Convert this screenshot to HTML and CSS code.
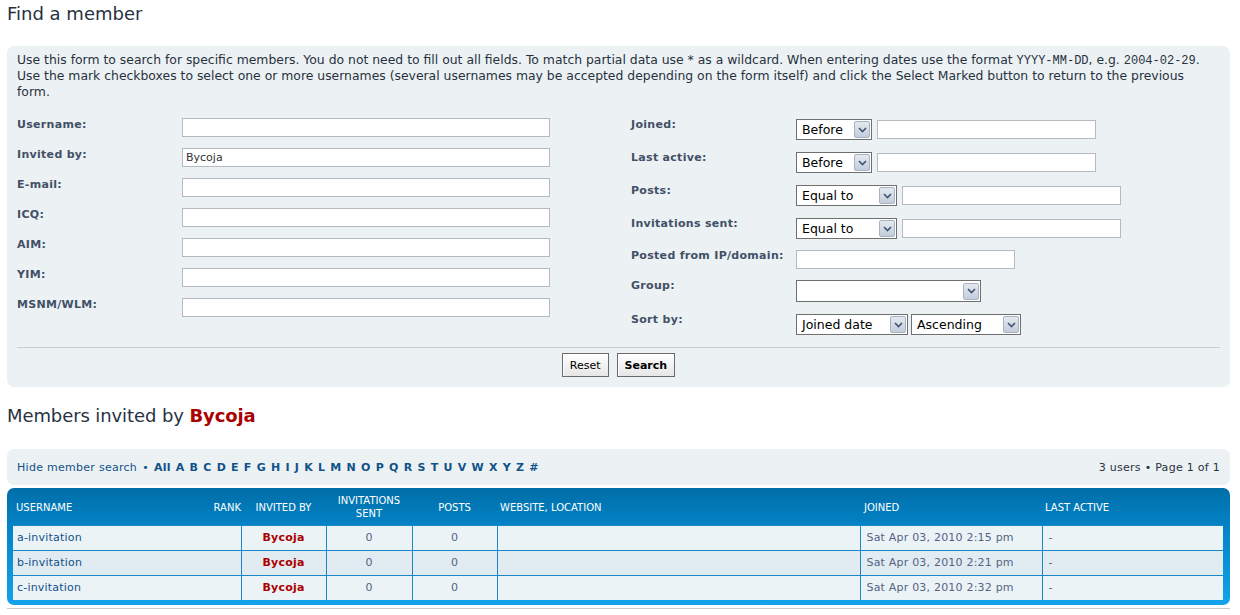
FILE: index.html
```html
<!DOCTYPE html>
<html lang="en">
<head>
<meta charset="utf-8">
<title>Find a member</title>
<link rel="stylesheet" href="styles.css">
</head>
<body>
<h2 class="title">Find a member</h2>
<form class="panel search-panel">
  <p class="intro">Use this form to search for specific members. You do not need to fill out all fields. To match partial data use * as a wildcard. When entering dates use the format <code>YYYY-MM-DD</code>, e.g. <code>2004-02-29</code>. Use the mark checkboxes to select one or more usernames (several usernames may be accepted depending on the form itself) and click the Select Marked button to return to the previous form.</p>
  <div class="fields">
    <div class="col col-left">
      <div class="row"><label class="lbl">Username:</label><input class="inp w-long" type="text"></div>
      <div class="row"><label class="lbl">Invited by:</label><input class="inp w-long" type="text" value="Bycoja"></div>
      <div class="row"><label class="lbl">E-mail:</label><input class="inp w-long" type="text"></div>
      <div class="row"><label class="lbl">ICQ:</label><input class="inp w-long" type="text"></div>
      <div class="row"><label class="lbl">AIM:</label><input class="inp w-long" type="text"></div>
      <div class="row"><label class="lbl">YIM:</label><input class="inp w-long" type="text"></div>
      <div class="row"><label class="lbl">MSNM/WLM:</label><input class="inp w-long" type="text"></div>
    </div>
    <div class="col col-right">
      <div class="rrow h33"><label class="lbl">Joined:</label><span class="sel w-before"><span class="sel-text">Before</span><span class="arrow"><svg width="9" height="6" viewBox="0 0 9 6"><path d="M1 1 L4.5 4.5 L8 1" fill="none" stroke="#3f5374" stroke-width="1.6"/></svg></span></span><input class="inp w-mid" type="text"></div>
      <div class="rrow h33"><label class="lbl">Last active:</label><span class="sel w-before"><span class="sel-text">Before</span><span class="arrow"><svg width="9" height="6" viewBox="0 0 9 6"><path d="M1 1 L4.5 4.5 L8 1" fill="none" stroke="#3f5374" stroke-width="1.6"/></svg></span></span><input class="inp w-mid" type="text"></div>
      <div class="rrow h33"><label class="lbl">Posts:</label><span class="sel w-equal"><span class="sel-text">Equal to</span><span class="arrow"><svg width="9" height="6" viewBox="0 0 9 6"><path d="M1 1 L4.5 4.5 L8 1" fill="none" stroke="#3f5374" stroke-width="1.6"/></svg></span></span><input class="inp w-mid" type="text"></div>
      <div class="rrow h32"><label class="lbl">Invitations sent:</label><span class="sel w-equal"><span class="sel-text">Equal to</span><span class="arrow"><svg width="9" height="6" viewBox="0 0 9 6"><path d="M1 1 L4.5 4.5 L8 1" fill="none" stroke="#3f5374" stroke-width="1.6"/></svg></span></span><input class="inp w-mid" type="text"></div>
      <div class="rrow h30"><label class="lbl">Posted from IP/domain:</label><input class="inp w-mid first" type="text"></div>
      <div class="rrow h34"><label class="lbl">Group:</label><span class="sel w-group tall"><span class="sel-text"></span><span class="arrow"><svg width="9" height="6" viewBox="0 0 9 6"><path d="M1 1 L4.5 4.5 L8 1" fill="none" stroke="#3f5374" stroke-width="1.6"/></svg></span></span></div>
      <div class="rrow"><label class="lbl">Sort by:</label><span class="sel w-sortkey"><span class="sel-text">Joined date</span><span class="arrow"><svg width="9" height="6" viewBox="0 0 9 6"><path d="M1 1 L4.5 4.5 L8 1" fill="none" stroke="#3f5374" stroke-width="1.6"/></svg></span></span><span class="sel w-sortdir"><span class="sel-text">Ascending</span><span class="arrow"><svg width="9" height="6" viewBox="0 0 9 6"><path d="M1 1 L4.5 4.5 L8 1" fill="none" stroke="#3f5374" stroke-width="1.6"/></svg></span></span></div>
    </div>
  </div>
  <hr class="sep">
  <div class="buttons">
    <button type="reset" class="btn">Reset</button>
    <button type="button" class="btn primary">Search</button>
  </div>
</form>

<h2 class="title sub">Members invited by <span class="user">Bycoja</span></h2>

<div class="panel navbar">
  <div class="nav-left">
    <a class="nav-link" href="#">Hide member search</a>
    <span class="bullet">&bull;</span>
    <span class="letters">
      <a href="#">All</a><a href="#">A</a><a href="#">B</a><a href="#">C</a><a href="#">D</a><a href="#">E</a><a href="#">F</a><a href="#">G</a><a href="#">H</a><a href="#">I</a><a href="#">J</a><a href="#">K</a><a href="#">L</a><a href="#">M</a><a href="#">N</a><a href="#">O</a><a href="#">P</a><a href="#">Q</a><a href="#">R</a><a href="#">S</a><a href="#">T</a><a href="#">U</a><a href="#">V</a><a href="#">W</a><a href="#">X</a><a href="#">Y</a><a href="#">Z</a><a href="#">#</a>
    </span>
  </div>
  <div class="nav-right">3 users &bull; Page <strong class="pg">1</strong> of <strong class="pg">1</strong></div>
</div>

<div class="forumbg">
  <table class="members">
    <thead>
      <tr>
        <th class="c-name"><span class="rank">Rank</span>Username</th>
        <th class="c-inv center">Invited by</th>
        <th class="c-sent center">Invitations sent</th>
        <th class="c-posts center">Posts</th>
        <th class="c-web">Website, Location</th>
        <th class="c-joined">Joined</th>
        <th class="c-active">Last active</th>
      </tr>
    </thead>
    <tbody>
      <tr class="bg1">
        <td class="first"><a href="#" class="uname">a-invitation</a></td>
        <td class="center"><a href="#" class="inviter">Bycoja</a></td>
        <td class="center">0</td>
        <td class="center">0</td>
        <td></td>
        <td class="date">Sat Apr 03, 2010 2:15 pm</td>
        <td class="date">-</td>
      </tr>
      <tr class="bg2">
        <td class="first"><a href="#" class="uname">b-invitation</a></td>
        <td class="center"><a href="#" class="inviter">Bycoja</a></td>
        <td class="center">0</td>
        <td class="center">0</td>
        <td></td>
        <td class="date">Sat Apr 03, 2010 2:21 pm</td>
        <td class="date">-</td>
      </tr>
      <tr class="bg1">
        <td class="first"><a href="#" class="uname">c-invitation</a></td>
        <td class="center"><a href="#" class="inviter">Bycoja</a></td>
        <td class="center">0</td>
        <td class="center">0</td>
        <td></td>
        <td class="date">Sat Apr 03, 2010 2:32 pm</td>
        <td class="date">-</td>
      </tr>
    </tbody>
  </table>
</div>
<div class="bottom-line"></div>
</body>
</html>
```

FILE: styles.css
```css
* { box-sizing: border-box; }

html, body { background: #ffffff; }

body {
  margin: 0;
  padding: 0 10px 0 7px;
  font-family: "DejaVu Sans", Verdana, sans-serif;
  font-size: 11px;
  color: #536482;
}

a { text-decoration: none; color: #105289; }

.title {
  margin: 0 0 18px 0;
  font-size: 18px;
  line-height: 28px;
  font-weight: normal;
  color: #28313f;
}

.title.sub {
  margin: 15px 0 19px 0;
  letter-spacing: -0.1px;
}

.title .user {
  color: #aa0000;
  font-weight: bold;
}

.panel {
  background: #ecf1f3;
  border-radius: 7px;
}

.search-panel {
  margin: 0;
  padding: 6px 10px 10px 10px;
}

.intro {
  margin: 0;
  font-size: 12.4px;
  line-height: 16px;
  color: #28313f;
}

.intro code {
  font-family: "Liberation Mono", "Courier New", monospace;
  font-size: 12px;
  line-height: 1;
  white-space: nowrap;
}

.fields {
  display: grid;
  grid-template-columns: 614px 1fr;
  margin-top: 18px;
  margin-bottom: 12px;
}

.col { display: flex; flex-direction: column; }

.col-right { padding-top: 1px; }

.row {
  display: flex;
  align-items: flex-start;
  height: 30px;
}

.rrow {
  display: flex;
  align-items: flex-start;
}

.h33 { height: 33px; }
.h32 { height: 32px; }
.h30 { height: 30px; }
.h34 { height: 34px; }

.lbl {
  width: 165px;
  flex: none;
  font-weight: bold;
  color: #425067;
  line-height: 16px;
  letter-spacing: 0.3px;
  margin-top: -1px;
}

.rrow .lbl { margin-top: -2px; }

.inp {
  height: 19px;
  border: 1px solid #b4bac0;
  background: #ffffff;
  padding: 0 3px;
  font-family: "DejaVu Sans", Verdana, sans-serif;
  font-size: 11px;
  color: #333333;
  outline: none;
}

.w-long { width: 368px; }
.w-mid { width: 219px; margin-left: 5px; margin-top: 1px; }
.w-mid.first { margin-left: 0; margin-top: 0; }

.sel {
  display: flex;
  align-items: center;
  justify-content: space-between;
  height: 21px;
  border: 1px solid #6f6f6f;
  background: #ffffff;
  padding: 0 1px 0 5px;
  color: #000000;
  font-size: 12.5px;
  flex: none;
}

.sel.tall { height: 22px; }

.sel-text { white-space: nowrap; }

.arrow {
  width: 16px;
  height: 17px;
  border: 1px solid #a7b2c2;
  border-radius: 2px;
  background: linear-gradient(to bottom, #e4e9f0, #c3cdda);
  display: flex;
  align-items: center;
  justify-content: center;
}

.w-before { width: 76px; }
.w-equal { width: 101px; }
.w-group { width: 185px; }
.w-sortkey { width: 112px; }
.w-sortdir { width: 110px; margin-left: 3px; }

.sep {
  margin: 0;
  border: 0;
  border-top: 1px solid #cccccc;
  height: 0;
}

.buttons {
  display: flex;
  justify-content: center;
  gap: 8px;
  margin-top: 5px;
}

.btn {
  height: 24px;
  padding: 0 7px;
  border: 1px solid #6a6a6a;
  background: linear-gradient(to bottom, #ffffff, #e6e6e6);
  font-family: "DejaVu Sans", Verdana, sans-serif;
  font-size: 11px;
  color: #000000;
  box-shadow: inset 1px 1px 0 #ffffff;
}

.btn.primary { font-weight: bold; }

.navbar {
  height: 36px;
  padding: 0 10px;
  display: flex;
  align-items: center;
  justify-content: space-between;
  margin-bottom: 3px;
  letter-spacing: 0.28px;
}

.nav-left { display: flex; align-items: center; }

.nav-link { color: #105289; }

.bullet { margin: 0 5px 0 5px; color: #105289; }

.letters { display: flex; gap: 5px; }

.letters a { font-weight: bold; color: #105289; }

.nav-right { color: #28313f; }

.pg { font-weight: normal; }

.forumbg {
  background: linear-gradient(to bottom, #006ea8 0px, #0384c8 40px, #12a3eb 100%);
  border-radius: 7px;
  padding: 0 7px 5px 6px;
}

.members {
  width: 100%;
  border-collapse: collapse;
  table-layout: fixed;
}

.members th {
  height: 37px;
  padding: 2px 3px 0 3px;
  color: #ffffff;
  font-weight: normal;
  font-size: 10px;
  line-height: 13px;
  text-transform: uppercase;
  text-align: left;
  vertical-align: middle;
}

.members th.center { text-align: center; }

.rank { float: right; margin-right: -3px; }

.c-name { width: 228px; }
.c-inv { width: 85px; }
.c-sent { width: 86px; }
.c-posts { width: 85px; }
.c-web { width: 363px; }
.c-joined { width: 182px; padding-left: 4px !important; }
.c-active { width: 181px; }

.members td {
  height: 25px;
  padding: 0 4px;
  border-top: 1px solid #1a88c6;
  border-left: 1px solid #1a88c6;
  color: #536482;
  font-size: 11px;
  letter-spacing: 0.2px;
  vertical-align: middle;
}

.members td.first { border-left: 0; }

.members td.center { text-align: center; }

.members td.date { padding-left: 6px; }

.bg1 td { background: #ecf3f7; }
.bg2 td { background: #e1ebf2; }

.uname { color: #105289; }

.inviter { color: #aa0000; font-weight: bold; }

.bottom-line {
  margin-top: 3px;
  border-top: 1px solid #cccccc;
}
```
